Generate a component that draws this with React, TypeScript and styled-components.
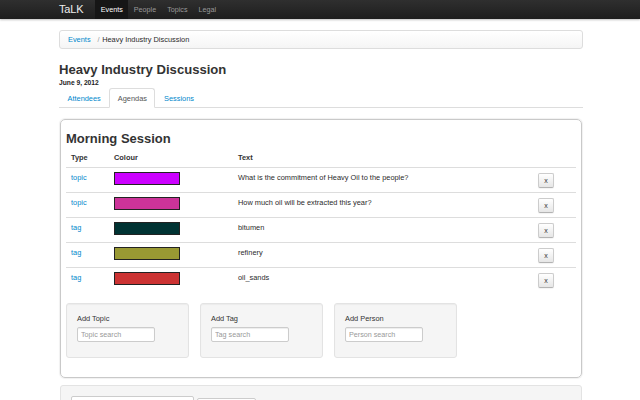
import styled, { createGlobalStyle } from "styled-components";

const rows = [
  { type: "topic", colour: "#cc00ff", text: "What is the commitment of Heavy Oil to the people?" },
  { type: "topic", colour: "#cc3399", text: "How much oil will be extracted this year?" },
  { type: "tag", colour: "#003333", text: "bitumen" },
  { type: "tag", colour: "#999933", text: "refinery" },
  { type: "tag", colour: "#cc3333", text: "oil_sands" },
];

const adders = [
  { label: "Add Topic", placeholder: "Topic search" },
  { label: "Add Tag", placeholder: "Tag search" },
  { label: "Add Person", placeholder: "Person search" },
];

export default function App() {
  return (
    <>
      <GlobalStyle />
      <Navbar>
        <NavInner>
          <Brand>TaLK</Brand>
          <NavLink $active>Events</NavLink>
          <NavLink>People</NavLink>
          <NavLink>Topics</NavLink>
          <NavLink>Legal</NavLink>
        </NavInner>
      </Navbar>
      <Container>
        <Breadcrumb>
          <Link>Events</Link>
          <Divider>/</Divider>
          <span>Heavy Industry Discussion</span>
        </Breadcrumb>
        <Title>Heavy Industry Discussion</Title>
        <DateLine>June 9, 2012</DateLine>
        <Tabs>
          <Tab>Attendees</Tab>
          <Tab $active>Agendas</Tab>
          <Tab>Sessions</Tab>
        </Tabs>
        <Panel>
          <SessionTitle>Morning Session</SessionTitle>
          <Table>
            <colgroup>
              <col style={{ width: 43 }} />
              <col style={{ width: 124 }} />
              <col style={{ width: 300 }} />
              <col style={{ width: 43 }} />
            </colgroup>
            <thead>
              <tr>
                <Th>Type</Th>
                <Th>Colour</Th>
                <Th>Text</Th>
                <Th />
              </tr>
            </thead>
            <tbody>
              {rows.map((r, i) => (
                <tr key={i}>
                  <Td>
                    <Link>{r.type}</Link>
                  </Td>
                  <Td>
                    <Swatch $colour={r.colour} />
                  </Td>
                  <Td>{r.text}</Td>
                  <Td>
                    <RemoveButton>x</RemoveButton>
                  </Td>
                </tr>
              ))}
            </tbody>
          </Table>
          <Wells>
            {adders.map((a) => (
              <Well key={a.label}>
                <WellLabel>{a.label}</WellLabel>
                <SearchInput placeholder={a.placeholder} />
              </Well>
            ))}
          </Wells>
        </Panel>
        <BottomWell>
          <WideInput />
          <PlainButton />
        </BottomWell>
      </Container>
    </>
  );
}

const GlobalStyle = createGlobalStyle`
  html, body {
    margin: 0;
    background: #fff;
    overflow: hidden;
  }
  body {
    font-family: "Liberation Sans", Arial, sans-serif;
    font-size: 7.4px;
    line-height: 11px;
    color: #2a2a2a;
  }
`;

const Navbar = styled.div`
  height: 19px;
  background: linear-gradient(#2f2f2f, #1e1e1e);
  box-shadow: 0 1px 2px rgba(0, 0, 0, 0.25);
`;

const NavInner = styled.div`
  width: 524px;
  margin-left: 59px;
  height: 100%;
  display: flex;
  align-items: stretch;
`;

const Brand = styled.div`
  font-size: 11px;
  color: #eee;
  display: flex;
  align-items: center;
  margin-right: 12px;
  letter-spacing: -0.2px;
`;

const NavLink = styled.a<{ $active?: boolean }>`
  display: flex;
  align-items: center;
  padding: 0 5.5px;
  font-size: 7.2px;
  color: ${(p) => (p.$active ? "#fff" : "#999")};
  background: ${(p) => (p.$active ? "#161616" : "transparent")};
`;

const Container = styled.div`
  width: 524px;
  margin: 0 0 0 59px;
  padding-top: 11px;
`;

const Breadcrumb = styled.div`
  height: 17px;
  display: flex;
  align-items: center;
  padding: 0 8px;
  border: 1px solid #ddd;
  border-radius: 3px;
  background: linear-gradient(#fff, #f5f5f5);
  box-shadow: inset 0 1px 0 #fff;
`;

const Link = styled.a`
  color: #0088cc;
`;

const Divider = styled.span`
  color: #999;
  padding: 0 2.5px 0 7px;
`;

const Title = styled.h2`
  margin: 13px 0 0;
  font-size: 13.1px;
  line-height: 15px;
  font-weight: bold;
  color: #333;
`;

const DateLine = styled.div`
  margin-top: 2px;
  font-size: 6.7px;
  line-height: 8px;
  font-weight: bold;
  color: #222;
`;

const Tabs = styled.div`
  margin-top: 1px;
  display: flex;
  border-bottom: 1px solid #ddd;
`;

const Tab = styled.a<{ $active?: boolean }>`
  padding: 3.5px 7.5px;
  line-height: 11px;
  margin-bottom: -1px;
  border: 1px solid ${(p) => (p.$active ? "#ddd" : "transparent")};
  border-bottom-color: ${(p) => (p.$active ? "#fff" : "transparent")};
  border-radius: 3px 3px 0 0;
  background: ${(p) => (p.$active ? "#fff" : "transparent")};
  color: ${(p) => (p.$active ? "#555" : "#0088cc")};
`;

const Panel = styled.div`
  margin: 11px 1px 0;
  padding: 11px 5px 19px;
  border: 1px solid #c9c9c9;
  border-radius: 5px;
  box-shadow: 0 0 1px 1px rgba(0, 0, 0, 0.06);
`;

const SessionTitle = styled.h3`
  margin: 0 0 2px;
  font-size: 13px;
  line-height: 15px;
  font-weight: bold;
  color: #333;
`;

const Table = styled.table`
  width: 510px;
  border-collapse: collapse;
  table-layout: fixed;
  tbody td {
    border-top: 1px solid #ddd;
  }
`;

const Th = styled.th`
  text-align: left;
  font-weight: bold;
  padding: 4px 5px;
  line-height: 11px;
  color: #333;
`;

const Td = styled.td`
  padding: 4px 5px;
  vertical-align: top;
  line-height: 11px;
`;

const Swatch = styled.div<{ $colour: string }>`
  width: 66px;
  height: 13px;
  box-sizing: border-box;
  border: 1px solid #222;
  background: ${(p) => p.$colour};
`;

const RemoveButton = styled.button`
  display: block;
  margin-top: 1px;
  width: 16px;
  height: 15px;
  padding: 0;
  font-family: inherit;
  font-size: 7px;
  line-height: 12px;
  color: #333;
  background: linear-gradient(#fff, #e6e6e6);
  border: 1px solid #ccc;
  border-bottom-color: #b3b3b3;
  border-radius: 2px;
  box-shadow: inset 0 1px 0 rgba(255, 255, 255, 0.2), 0 1px 1px rgba(0, 0, 0, 0.05);
`;

const Wells = styled.div`
  margin-top: 11px;
  display: flex;
  gap: 11px;
`;

const Well = styled.div`
  width: 123px;
  height: 55px;
  box-sizing: border-box;
  padding: 9px 10px 0;
  background: #f5f5f5;
  border: 1px solid #e3e3e3;
  border-radius: 3px;
  box-shadow: inset 0 1px 1px rgba(0, 0, 0, 0.04);
`;

const WellLabel = styled.div`
  line-height: 11px;
  margin-bottom: 3px;
  color: #333;
`;

const SearchInput = styled.input`
  display: block;
  width: 78px;
  height: 15px;
  box-sizing: border-box;
  padding: 0 3px;
  font-family: inherit;
  font-size: 7.2px;
  color: #555;
  background: #fff;
  border: 1px solid #ccc;
  border-radius: 2px;
  box-shadow: inset 0 1px 1px rgba(0, 0, 0, 0.075);
  outline: none;
  &::placeholder {
    color: #999;
  }
`;

const BottomWell = styled.div`
  margin: 7px 1px 0;
  height: 40px;
  padding: 10px 10px 0;
  display: flex;
  align-items: flex-start;
  gap: 3px;
  background: #f5f5f5;
  border: 1px solid #e3e3e3;
  border-radius: 3px;
`;

const WideInput = styled.input`
  width: 123px;
  height: 16px;
  box-sizing: border-box;
  background: #fff;
  border: 1px solid #ccc;
  border-radius: 2px;
`;

const PlainButton = styled.button`
  margin-top: 2px;
  width: 59px;
  height: 16px;
  background: linear-gradient(#fff, #e6e6e6);
  border: 1px solid #ccc;
  border-radius: 2px;
`;
